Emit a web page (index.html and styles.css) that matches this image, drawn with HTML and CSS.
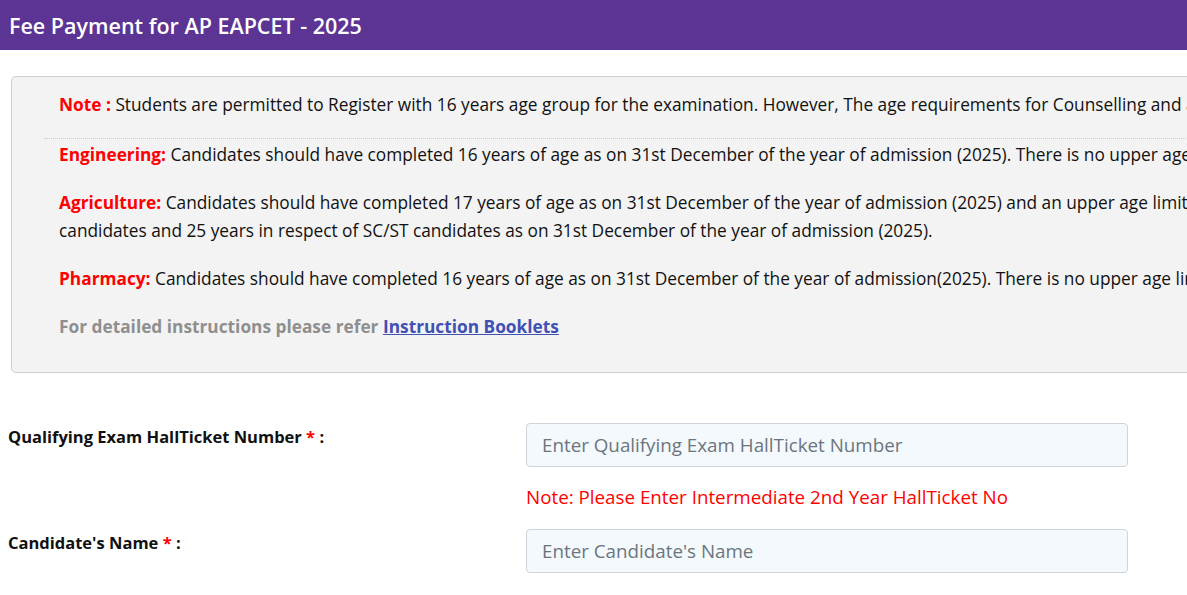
FILE: index.html
```html
<!DOCTYPE html>
<html lang="en">
<head>
    <meta charset="UTF-8">
    <meta name="viewport" content="width=device-width, initial-scale=1.0">
    <title>Fee Payment for AP EAPCET - 2025</title>
    <link rel="stylesheet" href="styles.css">
</head>
<body>
    <div class="page-header">
        <h1>Fee Payment for AP EAPCET - 2025</h1>
    </div>

    <div class="page-body">
        <div class="note-box">
            <p class="note-first"><span class="tag">Note :</span> Students are permitted to Register with 16 years age group for the examination. However, The age requirements for Counselling and admission shall be as follows.</p>
            <p><span class="tag">Engineering:</span> Candidates should have completed 16 years of age as on 31st December of the year of admission (2025). There is no upper age limit.</p>
            <p><span class="tag">Agriculture:</span> Candidates should have completed 17 years of age as on 31st December of the year of admission (2025) and an upper age limit of 22 years in respect of other candidates and 25 years in respect of SC/ST candidates as on 31st December of the year of admission (2025).</p>
            <p><span class="tag">Pharmacy:</span> Candidates should have completed 16 years of age as on 31st December of the year of admission(2025). There is no upper age limit.</p>
            <p class="refer">For detailed instructions please refer <a href="#">Instruction Booklets</a></p>
        </div>

        <form class="fee-form">
            <div class="form-row">
                <label for="htno">Qualifying Exam HallTicket Number <span class="req">*</span> :</label>
                <div class="field">
                    <input type="text" id="htno" placeholder="Enter Qualifying Exam HallTicket Number">
                    <div class="hint">Note: Please Enter Intermediate 2nd Year HallTicket No</div>
                </div>
            </div>
            <div class="form-row">
                <label for="cname">Candidate's Name <span class="req">*</span> :</label>
                <div class="field">
                    <input type="text" id="cname" placeholder="Enter Candidate's Name">
                </div>
            </div>
        </form>
    </div>
</body>
</html>
```

FILE: styles.css
```css
:root {
    --header-bg: #5c3494;
    --box-bg: #f3f3f3;
    --box-border: #cfcfcf;
    --red: #ff0000;
    --link: #3f51b5;
    --input-bg: #f3f9fd;
}

* {
    margin: 0;
    padding: 0;
    box-sizing: border-box;
}

html {
    overflow: hidden;
}

body {
    font-family: 'Open Sans', 'Noto Sans', sans-serif;
    color: #111;
    background: #fff;
    width: 1518px;
}

.page-header {
    background-color: var(--header-bg);
    height: 50px;
    display: flex;
    align-items: center;
    padding-left: 9px;
}

.page-header h1 {
    color: #fff;
    font-size: 21.5px;
    font-weight: 600;
}

.page-body {
    padding: 26px 11px 0 11px;
}

.note-box {
    background-color: var(--box-bg);
    border: 1px solid var(--box-border);
    border-radius: 5px;
    padding: 14px 16px 31px 32px;
    font-size: 17.3px;
    line-height: 28px;
}

.note-box p {
    padding-left: 15px;
    margin-bottom: 20px;
}

.note-box .note-first {
    padding-bottom: 19px;
    margin-bottom: 2px;
    border-bottom: 1px dotted #c8c8c8;
}

.tag {
    color: var(--red);
    font-weight: 700;
}

.note-box .refer {
    color: #8f8f8f;
    font-weight: 700;
    margin-top: 20px;
    margin-bottom: 0;
}

.refer a {
    color: var(--link);
}

.fee-form {
    padding-top: 50px;
    width: 1130px;
}

.form-row {
    display: grid;
    grid-template-columns: 515px 602px;
    margin-bottom: 18px;
}

.form-row label {
    font-weight: 700;
    font-size: 16.5px;
    padding-top: 2px;
    margin-left: -3px;
}

.req {
    color: var(--red);
}

.field input {
    width: 100%;
    height: 44px;
    background-color: var(--input-bg);
    border: 1px solid #ced4da;
    border-radius: 4px;
    padding: 0 15px;
    font-family: inherit;
    font-size: 18.8px;
    color: #333;
}

.field input::placeholder {
    color: #6c757d;
}

.hint {
    color: var(--red);
    font-size: 18.8px;
    line-height: 28px;
    margin-top: 16px;
}
```
